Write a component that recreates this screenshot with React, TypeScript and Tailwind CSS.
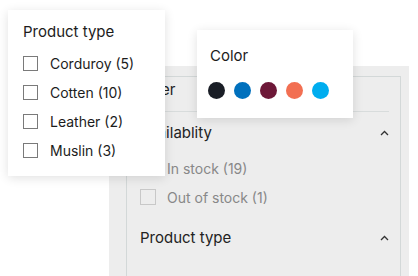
import * as React from "react"

const types = ["Corduroy (5)", "Cotten (10)", "Leather (2)", "Muslin (3)"]
const colors = ["bg-[#1a1e26]", "bg-[#0070bd]", "bg-[#6d1838]", "bg-[#f26f52]", "bg-[#00adef]"]

const Chevron: React.FC = () => (
  <svg width="9" height="6" viewBox="0 0 9 6" className="text-[#333]">
    <path d="M1 5 4.5 1.5 8 5" fill="none" stroke="currentColor" strokeWidth="1.3" />
  </svg>
)

const App: React.FC = () => {
  return (
    <div className="relative w-[418px] h-[276px] overflow-hidden bg-white font-['Inter',sans-serif]">
      {/* Filter panel behind */}
      <div className="ml-[109px] mt-[66px] w-[300px] h-[210px] bg-[#ededed] pl-[17px] pr-[8px] pt-[10px]">
        <div className="h-full border-x border-t border-[#d3d8d8] pl-[13px] pr-[11px]">
          <div className="h-[35px] pt-[3px] leading-[20px] border-b border-[#d8dcdc] text-[15px] text-[#222]">Filter</div>
          <div className="h-[42px] flex items-center justify-between text-[15px] text-[#222]">
            <span>Availablity</span>
            <Chevron />
          </div>
          <div className="mt-[6px] flex flex-col gap-[13px] text-[14px] text-[#888]">
            <label className="flex items-center gap-[11px] h-[16px]">
              <span className="w-[16px] h-[16px] border border-[#c8c8c8]" />
              In stock (19)
            </label>
            <label className="flex items-center gap-[11px] h-[16px]">
              <span className="w-[16px] h-[16px] border border-[#c8c8c8]" />
              Out of stock (1)
            </label>
          </div>
          <div className="mt-[18px] h-[30px] flex items-center justify-between text-[15px] text-[#222]">
            <span>Product type</span>
            <Chevron />
          </div>
        </div>
      </div>

      {/* Product type popover */}
      <div className="absolute left-[8px] top-[10px] w-[157px] h-[166px] bg-white shadow-[0_2px_10px_rgba(0,0,0,0.12)] pl-[15px] pt-[12px]">
        <div className="text-[15px] text-[#1c1c1c] h-[20px] leading-[20px]">Product type</div>
        <div className="mt-[7px] flex flex-col">
          {types.map((t) => (
            <label key={t} className="flex items-center gap-[12px] h-[29px] text-[14px] text-[#1c1c1c]">
              <span className="w-[15px] h-[15px] border border-[#7a7a7a]" />
              {t}
            </label>
          ))}
        </div>
      </div>

      {/* Color popover */}
      <div className="absolute left-[197px] top-[30px] w-[156px] h-[88px] bg-white shadow-[0_2px_10px_rgba(0,0,0,0.12)] pl-[11px] pt-[16px]">
        <div className="pl-[2px] text-[15px] text-[#1c1c1c] h-[20px] leading-[20px]">Color</div>
        <div className="mt-[16px] flex gap-[9px]">
          {colors.map((c) => (
            <span key={c} className={`w-[17px] h-[17px] rounded-full ${c}`} />
          ))}
        </div>
      </div>
    </div>
  )
}

export default App
